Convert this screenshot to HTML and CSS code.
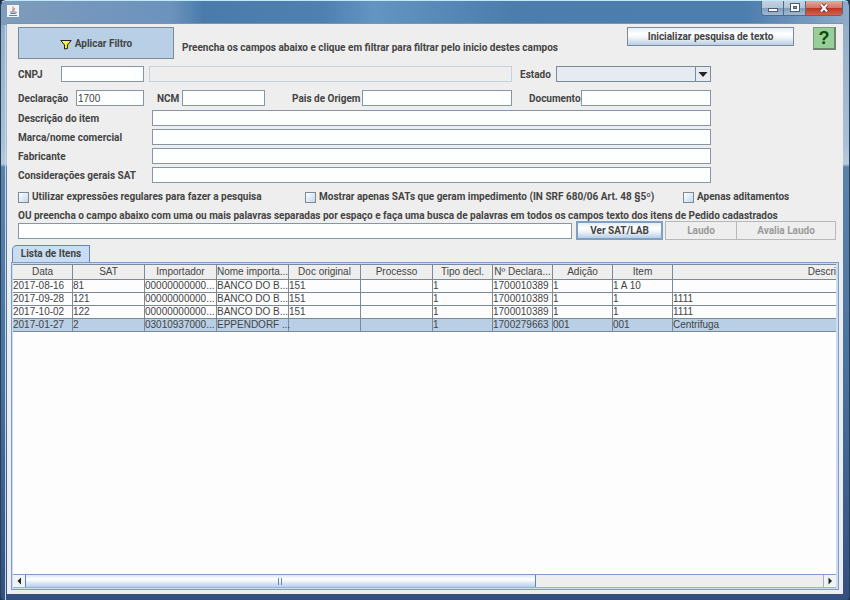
FILE: index.html
```html
<!DOCTYPE html>
<html lang="pt-BR">
<head>
<meta charset="utf-8">
<title>Lista de Itens</title>
<link rel="stylesheet" href="styles.css">
</head>
<body>
<div class="window">
  <header class="titlebar">
    <svg class="app-icon" viewBox="0 0 12 12" aria-hidden="true">
      <rect width="12" height="12" fill="#f1f3f5"/>
      <path d="M6.500 1.500C4.500 3 7.500 4 5.500 6M8 3C6.500 4 7.500 5 6.500 6" fill="none" stroke="#c9684a"/>
      <path d="M3 7h5.500M3.500 8.500h4.500M2 10.500h8M8.500 7c1.500 0 1 1.500-.5 1.500" fill="none" stroke="#667f9d"/>
    </svg>
    <div class="window-controls">
      <button class="control" aria-label="Minimizar"><svg viewBox="0 0 12 10"><rect x="1.500" y="5.500" width="9" height="3" fill="#fff" stroke="#4b5c72"/></svg></button>
      <button class="control" aria-label="Restaurar"><svg viewBox="0 0 12 10"><rect x="1.500" y=".5" width="9" height="8" fill="#fff" stroke="#4b5c72"/><rect x="4.500" y="3.500" width="3" height="2" fill="#8095b0" stroke="#4b5c72"/></svg></button>
      <button class="control control-close" aria-label="Fechar"><svg viewBox="0 0 12 10"><path d="M3 1.500l6 7M9 1.500l-6 7" stroke="#71352f" stroke-width="4"/><path d="M3 1.500l6 7M9 1.500l-6 7" stroke="#fff" stroke-width="2"/></svg></button>
    </div>
  </header>

  <main class="content">
    <form class="filters">
      <div class="toolbar">
        <button type="button" class="apply">
          <svg class="funnel" viewBox="0 0 12 11" aria-hidden="true"><path d="M.8 1.500h10.400L7.500 6v3.500l-3 .5V6z" fill="#f4ec22" stroke="#222"/><path d="M3 3h4" stroke="#fffbb0"/></svg>
          Aplicar Filtro
        </button>
        <p class="hint">Preencha os campos abaixo e clique em filtrar para filtrar pelo inicio destes campos</p>
        <button type="button" class="button reset">Inicializar pesquisa de texto</button>
        <button type="button" class="help" aria-label="Ajuda">?</button>
      </div>

      <div class="fields">
        <div class="row">
          <label class="label-cnpj" for="cnpj">CNPJ</label>
          <input class="input-cnpj" id="cnpj" type="text">
          <input class="input-name" type="text" aria-label="Nome" disabled>
          <label class="label-state" for="estado">Estado</label>
          <div class="select-box">
            <select id="estado"><option></option></select>
            <svg class="select-arrow" viewBox="0 0 15 14" aria-hidden="true"><path d="M.5 0v14" stroke="#7a8a99"/><path d="M3.500 5h9L8 10z" fill="#222"/></svg>
          </div>
        </div>
        <div class="row row-codes">
          <label class="label-decl" for="declaracao">Declaração</label>
          <input class="input-decl" id="declaracao" type="text" value="1700">
          <label class="label-ncm" for="ncm">NCM</label>
          <input class="input-ncm" id="ncm" type="text">
          <label class="label-country" for="pais">Pais de Origem</label>
          <input class="input-country" id="pais" type="text">
          <label class="label-doc" for="documento">Documento</label>
          <input class="input-doc" id="documento" type="text">
        </div>
        <div class="texts">
          <label for="descricao">Descrição do item</label><input id="descricao" type="text">
          <label for="marca">Marca/nome comercial</label><input id="marca" type="text">
          <label for="fabricante">Fabricante</label><input id="fabricante" type="text">
          <label for="consideracoes">Considerações gerais SAT</label><input id="consideracoes" type="text">
        </div>
      </div>

      <div class="checks">
        <label><input type="checkbox">Utilizar expressões regulares para fazer a pesquisa</label>
        <label><input type="checkbox">Mostrar apenas SATs que geram impedimento (IN SRF 680/06 Art. 48 §5º)</label>
        <label><input type="checkbox">Apenas aditamentos</label>
      </div>

      <label class="search-label" for="busca">OU preencha o campo abaixo com uma ou mais palavras separadas por espaço e faça uma busca de palavras em todos os campos texto dos itens de Pedido cadastrados</label>
      <div class="search">
        <input id="busca" type="text">
        <button type="button" class="button view">Ver SAT/LAB</button>
        <button type="button" class="button report" disabled>Laudo</button>
        <button type="button" class="button rate" disabled>Avalia Laudo</button>
      </div>
    </form>

    <section class="tabs">
      <button type="button" class="tab">Lista de Itens</button>
      <div class="panel">
        <div class="list">
          <table>
            <colgroup>
              <col class="c-date"><col class="c-wide"><col class="c-wide"><col class="c-wide"><col class="c-wide"><col class="c-wide">
              <col class="c-narrow"><col class="c-narrow"><col class="c-narrow"><col class="c-narrow"><col>
            </colgroup>
            <thead>
              <tr><th>Data</th><th>SAT</th><th>Importador</th><th>Nome importa...</th><th>Doc original</th><th>Processo</th><th>Tipo decl.</th><th>Nº Declara...</th><th>Adição</th><th>Item</th><th class="cut">Descri</th></tr>
            </thead>
            <tbody>
              <tr><td>2017-08-16</td><td>81</td><td>00000000000...</td><td>BANCO DO B...</td><td>151</td><td></td><td>1</td><td>1700010389</td><td>1</td><td>1 A 10</td><td></td></tr>
              <tr><td>2017-09-28</td><td>121</td><td>00000000000...</td><td>BANCO DO B...</td><td>151</td><td></td><td>1</td><td>1700010389</td><td>1</td><td>1</td><td>1111</td></tr>
              <tr><td>2017-10-02</td><td>122</td><td>00000000000...</td><td>BANCO DO B...</td><td>151</td><td></td><td>1</td><td>1700010389</td><td>1</td><td>1</td><td>1111</td></tr>
              <tr class="selected"><td>2017-01-27</td><td>2</td><td>03010937000...</td><td>EPPENDORF ...</td><td></td><td></td><td>1</td><td>1700279663</td><td>001</td><td>001</td><td>Centrifuga</td></tr>
            </tbody>
          </table>
        </div>
        <div class="scrollbar">
          <button type="button" class="arrow" aria-label="Rolar para a esquerda"><svg viewBox="0 0 12 12"><path d="M8 2.500v7L4.500 6z" fill="#222"/></svg></button>
          <div class="track"><div class="thumb"><span class="grip"></span></div></div>
          <button type="button" class="arrow arrow-right" aria-label="Rolar para a direita"><svg viewBox="0 0 12 12"><path d="M4.500 2.500v7L8 6z" fill="#222"/></svg></button>
        </div>
      </div>
    </section>
  </main>
</div>
</body>
</html>
```
FILE: styles.css
```css
* { box-sizing: border-box; }

body {
  margin: 0;
  background: #20334d;
  color: #444444;
  font: bold 10px/12px Roboto, "Liberation Sans", Arial, sans-serif;
}

button, input, select { margin: 0; padding: 0; font: inherit; color: inherit; border-radius: 0; }
button svg { display: block; }

.window {
  display: flex;
  flex-direction: column;
  min-height: 100vh;
  padding: 0 6px 6px;
  border-top: 1px solid #bfe9fb;
  border-radius: 6px 6px 4px 4px;
  background:
    linear-gradient(#bdd9ee, #bdd9ee) left 4px top 24px / 1px 100% no-repeat,
    linear-gradient(90deg, #7f9cba 0, #7396bd 12%, #6c93bd 20%, #4a7bab 24%, #4f80b0 38%, #6394c2 44%, #4c7dac 60%, #4d7eae 88%, #8fabc8 100%) top / 100% 24px no-repeat,
    linear-gradient(#92aac4 0, #a9bfd6 140px, #b7c9dc 163px, #5a82a9 166px, #4a72a0 60%, #33507f 100%);
  border-left: 1px solid #24405c;
  border-right: 1px solid #24405c;
}

.titlebar {
  display: flex;
  justify-content: space-between;
  align-items: flex-start;
  height: 23px;
  border-bottom: 1px solid #7695b3;
}
.app-icon { width: 12px; height: 12px; margin-top: 4px; }
.window-controls {
  display: flex;
  height: 15px;
  border: 1px solid #536a84;
  border-top: 0;
  border-radius: 0 0 4px 4px;
  overflow: hidden;
}
.control {
  display: flex;
  justify-content: center;
  align-items: center;
  width: 22px;
  border: 0;
  border-right: 1px solid #536a84;
  background: linear-gradient(#c3d2e2, #b2c4d8 50%, #7f9bb9 50%, #a1bbd3);
}
.control svg { width: 12px; height: 10px; }
.control-close { width: 36px; border-right: 0; background: linear-gradient(#e2a99e, #d27565 50%, #bb3420 50%, #d7604a); }

.content {
  display: flex;
  flex: 1;
  flex-direction: column;
  padding: 3px 4px 4px;
  background: #eeeeee;
}
.filters { padding: 0 3px 0 7px; }

.toolbar { display: flex; align-items: flex-start; }
.apply {
  display: flex;
  justify-content: center;
  align-items: center;
  gap: 3px;
  width: 156px;
  height: 32px;
  padding-top: 2px;
  border: 1px solid #7a8a99;
  background: #b8cfe5;
}
.funnel { width: 12px; height: 11px; }
.hint { flex: 1; margin: 15px 0 0 8px; white-space: nowrap; }
.button {
  height: 19px;
  border: 1px solid #7a8a99;
  background: linear-gradient(#e3edf6, #ffffff 35%, #f2f6fa 55%, #b8cfe5);
}
.reset { width: 167px; }
.help {
  width: 23px;
  height: 23px;
  margin-left: 19px;
  border: 1px solid #7c9a7c;
  border-right: 2px solid #6f816f;
  border-bottom: 2px solid #6f816f;
  background: #98cf98;
  color: #0b4a0b;
  font: bold 18px/18px "Liberation Sans", Arial, sans-serif;
}

.fields { margin: 7px 125px 0 0; }
.fields input, .search input {
  height: 16px;
  min-width: 0;
  padding: 0 1px;
  border: 1px solid #8796a5;
  background: #fdfefe;
  font: 10px/12px "Liberation Sans", Arial, sans-serif;
}
.row { display: flex; align-items: center; }
.row-codes { margin-top: 8px; }
.row label { padding-top: 2px; white-space: nowrap; }
.label-cnpj { width: 43px; }
.input-cnpj { width: 83px; }
.fields .input-name { flex: 1; margin-left: 5px; border-color: #c3d2e0; background: #eeeeee; }
.label-state { width: 36px; margin-left: 8px; }
.select-box { position: relative; width: 155px; height: 16px; }
.select-box select {
  display: block;
  width: 100%;
  height: 16px;
  border: 1px solid #7a8a99;
  background: #e6ebf1;
  appearance: none;
}
.select-arrow { position: absolute; top: 1px; right: 1px; width: 15px; height: 14px; pointer-events: none; }
.label-decl { width: 58px; }
.input-decl { width: 68px; }
.label-ncm { width: 25px; margin-left: 13px; }
.input-ncm { width: 83px; }
.label-country { width: 70px; margin-left: 27px; }
.input-country { flex: 1; }
.label-doc { width: 52px; margin-left: 17px; }
.input-doc { width: 130px; }

.texts {
  display: grid;
  grid-template-columns: 134px 1fr;
  align-items: center;
  row-gap: 3px;
  margin-top: 4px;
}
.texts label { padding-top: 2px; white-space: nowrap; }

.checks { display: flex; margin-top: 8px; }
.checks label { display: flex; align-items: center; gap: 3px; white-space: nowrap; }
.checks label:nth-child(1) { width: 287px; }
.checks label:nth-child(2) { width: 378px; }
.checks input {
  width: 11px;
  height: 11px;
  border: 1px solid #7a8a99;
  background: linear-gradient(135deg, #ffffff, #c3d7ea);
  appearance: none;
}

.search-label { display: block; margin-top: 7px; white-space: nowrap; }
.search { display: flex; align-items: center; margin-top: -1px; }
.search input { flex: 1; }
.view { width: 87px; margin: 0 2px 0 4px; border: 2px solid #7f9fc4; }
.report { width: 72px; }
.rate { width: 100px; margin-left: -1px; }
.button:disabled { border-color: #b8b8b8; background: #eeeeee; color: #9a9a9a; }

.tabs { display: flex; flex: 1; flex-direction: column; align-items: stretch; margin-top: 5px; }
.tab {
  align-self: flex-start;
  width: 78px;
  height: 17px;
  margin-left: 1px;
  border: 1px solid #6382bf;
  border-bottom: 0;
  border-radius: 5px 0 0 0;
  background: #c8ddf2;
}
.panel {
  display: flex;
  flex: 1;
  flex-direction: column;
  padding: 1px 2px 1px 1px;
  border: 1px solid #7f9bc8;
  background: #c8ddf2;
}
.list { flex: 1; border-top: 1px solid #7a8a99; background: #fdfdfe; overflow: hidden; }
table {
  width: 100%;
  border-collapse: separate;
  border-spacing: 0;
  table-layout: fixed;
  font: 10px/12px "Liberation Sans", Arial, sans-serif;
}
.c-date { width: 60px; }
.c-wide { width: 72px; }
.c-narrow { width: 60px; }
th, td {
  height: 13px;
  padding: 0;
  border-right: 1px solid #7a8a99;
  border-bottom: 1px solid #7a8a99;
  text-align: left;
  white-space: nowrap;
}
th { height: 15px; background: #eeeeee; font-weight: normal; text-align: center; }
th:last-child, td:last-child { border-right: 0; }
.cut { text-align: right; }
.selected td { background: #b8cfe5; }

.scrollbar { display: flex; height: 14px; border-top: 1px solid #7f9bc8; border-bottom: 1px solid #9fb3c8; background: #eeeeee; }
.arrow { width: 12px; border: 0; background: #f0f3f5; }
.arrow svg { width: 12px; height: 12px; }
.arrow-right { width: 13px; border-left: 1px solid #a5b0bb; }
.track { flex: 1; }
.thumb {
  display: flex;
  justify-content: center;
  align-items: center;
  width: 64%;
  height: 12px;
  border: 1px solid #6382bf;
  border-width: 0 1px;
  background: linear-gradient(#dce8f4, #ffffff 35%, #b8cfe5);
}
.grip { width: 4px; height: 7px; border: 1px solid #6382bf; border-width: 0 1px; }
```
